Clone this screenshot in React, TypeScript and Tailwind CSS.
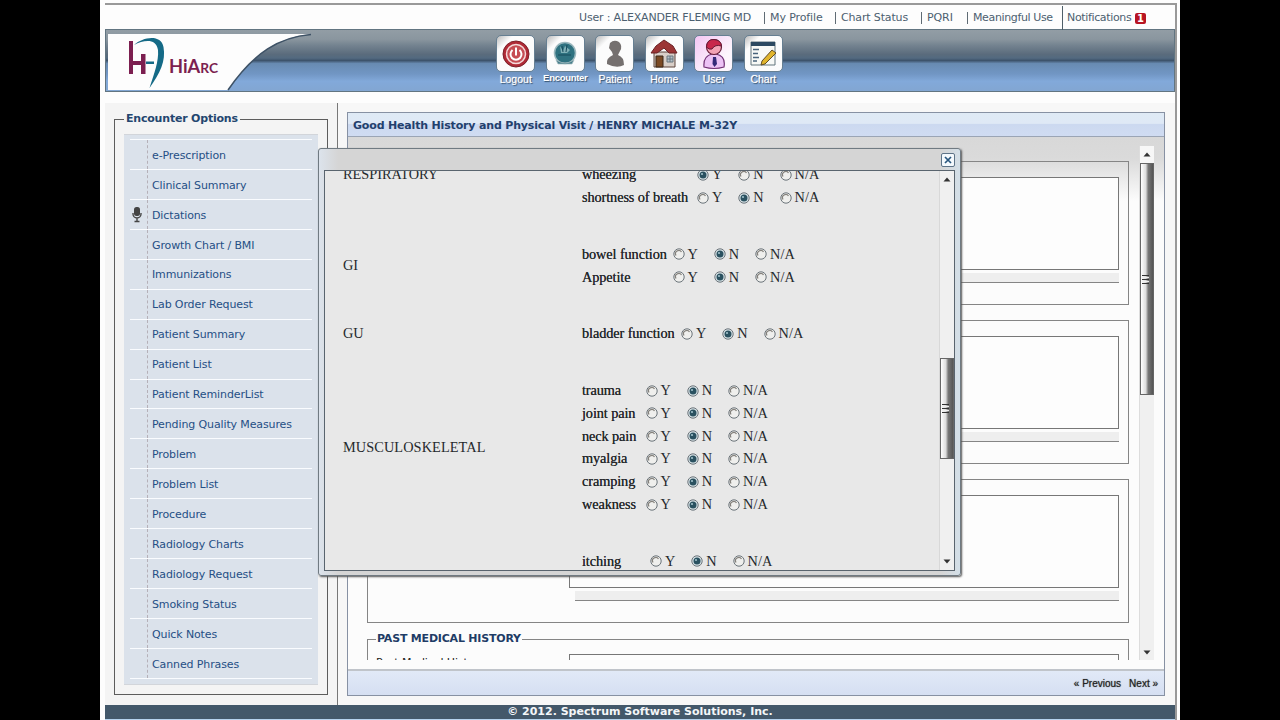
import React from 'react';

const MENU = [
    'e-Prescription', 'Clinical Summary', 'Dictations', 'Growth Chart / BMI', 'Immunizations',
    'Lab Order Request', 'Patient Summary', 'Patient List', 'Patient ReminderList',
    'Pending Quality Measures', 'Problem', 'Problem List', 'Procedure', 'Radiology Charts',
    'Radiology Request', 'Smoking Status', 'Quick Notes', 'Canned Phrases',
];

type Group = { name: string; label: string; pad: string; rows: [string, number][] };

// second value of a row is the selected answer: 0 = Y, 1 = N, 2 = N/A
const GROUPS: Group[] = [
    { name: 'RESPIRATORY', label: 'w-[115px]', pad: 'pt-[23px]', rows: [['wheezing', 0], ['shortness of breath', 1]] },
    { name: 'GI', label: 'w-[90.5px]', pad: '', rows: [['bowel function', 1], ['Appetite', 1]] },
    { name: 'GU', label: 'w-[99px]', pad: '', rows: [['bladder function', 1]] },
    {
        name: 'MUSCULOSKELETAL', label: 'w-[63.5px]', pad: '',
        rows: [['trauma', 1], ['joint pain', 1], ['neck pain', 1], ['myalgia', 1], ['cramping', 1], ['weakness', 1]],
    },
    { name: '', label: 'w-[68px]', pad: '', rows: [['itching', 1]] },
];

function Logo() {
    return (
        <svg width="230" height="61" viewBox="0 0 230 61" className="shrink-0">
            <path d="M2 4 H205 C174 7 148 22 122 60 H2 Z" fill="#fdfdfd" />
            <path d="M205 4.500 C174 7 148 22 122 60" fill="none" stroke="#3e5266" strokeWidth="1.500" />
            <path d="M23 11 h4 v20 h8 v-7 h4.500 v20 h-4.500 v-9 h-8 v9 h-4 z" fill="#7c1f50" />
            <path d="M28 15 C37 7 55 4 57.500 17 C60 31 54 43 43.500 58 C48 44 53 31 52 20 C50 8 38 10 28 15 Z" fill="#156a86" />
            <rect x="40" y="31.500" width="8" height="2.500" fill="#156a86" />
            <text x="63" y="42.500" fill="#7c1f50" fontFamily="Lato, sans-serif" fontWeight="700" fontSize="18.500" textLength="49" lengthAdjust="spacingAndGlyphs">
                HiA<tspan fontSize="14">RC</tspan>
            </text>
        </svg>
    );
}

function LogoutIcon() {
    return (
        <svg width="30" height="30" viewBox="0 0 30 30">
            <circle cx="15" cy="15" r="13" fill="#b02a36" stroke="#7c2029" />
            <circle cx="15" cy="15" r="9.500" fill="#c64d54" stroke="#f4dada" strokeWidth="1.500" />
            <path d="M11.500 11 a5.500 5.500 0 1 0 7 0 M15 8.500 v8" fill="none" stroke="#fff" strokeWidth="2" />
        </svg>
    );
}

function EncounterIcon() {
    return (
        <svg width="30" height="30" viewBox="0 0 30 30">
            <circle cx="15" cy="14" r="10.500" fill="#2f7280" stroke="#9ab7bd" strokeWidth="1.500" />
            <path d="M10 7 l3 5 2-5 5 4 -3 3 -6 0z" fill="#7fb0b6" />
            <path d="M12 7 l1 6 M17 6 l-1 7 M8 16 h13" stroke="#174b5b" fill="none" />
            <path d="M6 21 q9 6 18 0 l-2 4 h-14z" fill="#447d89" stroke="#a9bfc3" strokeWidth=".7" />
        </svg>
    );
}

function PatientIcon() {
    return (
        <svg width="30" height="32" viewBox="0 0 30 32">
            <path d="M10 5 Q14 1 19 4 Q23 8 20 13 L18 17 Q24 19 24 27 Q17 31 7 26 Q6 20 13 17 L12 14 L9 10 Z" fill="#75706f" />
        </svg>
    );
}

function HomeIcon() {
    return (
        <svg width="30" height="30" viewBox="0 0 30 30">
            <path d="M5 13 h21 v15 h-21z" fill="#d9cfc8" stroke="#5c443c" />
            <path d="M2 14 L7 7 L15 1 L24 7 L28 14 H20 L15 9 L8 14 Z" fill="#9c3535" stroke="#6b2225" />
            <path d="M7 17 h7 v11 h-7z" fill="#7b4a24" stroke="#3b2616" />
            <path d="M18 17 h6 v6 h-6z M21 17 v6 M18 20 h6" fill="#b4c0c8" stroke="#68777f" />
        </svg>
    );
}

function UserIcon() {
    return (
        <svg width="30" height="32" viewBox="0 0 30 32">
            <path d="M5 29 Q4 18 13 16 H17 Q27 18 25 29 Q15 32 5 29Z" fill="#ecc2f5" stroke="#713175" strokeWidth="1.200" />
            <circle cx="15" cy="9" r="7.500" fill="#f3a2b6" stroke="#651b37" strokeWidth="1.200" />
            <path d="M7.500 9 Q8 1 15 1.500 Q22 2 22.500 8 Q16 6 13 11 Q10 12 7.500 9Z" fill="#c8274b" stroke="#651b37" />
            <path d="M14 19 h3 l1 7 -2.500 3 -2-3z" fill="#342a79" />
        </svg>
    );
}

function ChartIcon() {
    return (
        <svg width="30" height="30" viewBox="0 0 30 30">
            <path d="M3 3 h24 v23 h-24z" fill="#f8f9f6" stroke="#63747c" />
            <path d="M3 3 h24 v4 h-24z" fill="#2c4961" />
            <path d="M5 10.500 h6 M5 14.500 h5 M5 18.500 h6 M5 22 h4" stroke="#49647c" strokeWidth="1.500" />
            <path d="M24 11 l4 3 -11 11 -4 1 1-4z" fill="#e1b52c" stroke="#604d28" />
        </svg>
    );
}

const TOOLS = [
    { name: 'Logout', icon: <LogoutIcon /> },
    { name: 'Encounter', icon: <EncounterIcon /> },
    { name: 'Patient', icon: <PatientIcon /> },
    { name: 'Home', icon: <HomeIcon /> },
    { name: 'User', icon: <UserIcon /> },
    { name: 'Chart', icon: <ChartIcon /> },
];

function Radio({ on }: { on: boolean }) {
    return (
        <svg width="12" height="12" viewBox="0 0 12 12" className="shrink-0">
            <circle cx="6" cy="6" r="5.200" fill={on ? '#d7e2e6' : '#efefed'} stroke="#6b747a" />
            {on ? (
                <>
                    <circle cx="6" cy="6" r="3.500" fill="#2a5160" />
                    <circle cx="5" cy="5" r="1.100" fill="#9fc0ca" />
                </>
            ) : (
                <path d="M3 7.500 A3.200 3.200 0 0 1 8.500 4" fill="none" stroke="#85827d" strokeWidth="1.300" />
            )}
        </svg>
    );
}

function Grip() {
    return (
        <div className="-ml-[3px] flex w-[7px] flex-col gap-px">
            <div className="h-px bg-[#333]" />
            <div className="h-px bg-[#eee]" />
            <div className="h-px bg-[#333]" />
            <div className="h-px bg-[#eee]" />
            <div className="h-px bg-[#333]" />
        </div>
    );
}

function Arrow({ down }: { down?: boolean }) {
    return (
        <svg width="8" height="5" viewBox="0 0 8 5">
            <path d={down ? 'M0.500 0.500 h7 L4 4.500z' : 'M0.500 4.500 h7 L4 .5z'} fill="#333" />
        </svg>
    );
}

function TopNav() {
    return (
        <div className="flex h-[25px] items-center bg-[#fdfdfd] pt-px pl-[474px] text-[11px] whitespace-nowrap text-[#4c6070]">
            <div className="w-[185px] tracking-[-0.17px]">User : ALEXANDER FLEMING MD</div>
            <div className="w-[71px] border-l border-[#5f6b74] pl-[5px] leading-[12px] tracking-[-0.1px]">My Profile</div>
            <div className="w-[86px] border-l border-[#5f6b74] pl-[5px] leading-[12px] tracking-[-0.15px]">Chart Status</div>
            <div className="w-[46px] border-l border-[#5f6b74] pl-[5px] leading-[12px] tracking-[-0.1px]">PQRI</div>
            <div className="w-[95px] border-l border-[#5f6b74] pl-[5px] leading-[12px] tracking-[-0.37px]">Meaningful Use</div>
            <div className="flex h-full items-center border-l border-[#4f5f69] pl-[4px]">
                <span className="w-[68px] tracking-[-0.35px]">Notifications</span>
                <span className="flex h-[11px] w-[11px] items-center justify-center rounded-[2px] bg-[#b81422] text-[10px] font-bold text-white">1</span>
            </div>
        </div>
    );
}

function Banner() {
    return (
        <div className="flex h-[63px] overflow-hidden border border-[#627581] bg-[linear-gradient(#929da5_0%,#8a969f_15%,#748390_25%,#5a6b7c_40%,#536a80_46%,#3d536b_50%,#688bb2_55%,#7196c4_72%,#82a9da_84%,#82a6d2_100%)]">
            <Logo />
            <div className="ml-[155px] flex pt-[5px]">
                {TOOLS.map((t) => (
                    <div key={t.name} className="flex w-[49.5px] flex-col items-center">
                        <div className={t.name === 'User'
                            ? 'flex h-[37px] w-[39px] items-center justify-center rounded-[5px] border border-[#667f92] bg-[linear-gradient(135deg,#f3c6f3,#fdf6fd_70%)]'
                            : 'flex h-[37px] w-[39px] items-center justify-center rounded-[5px] border border-[#667f92] bg-[linear-gradient(135deg,#bbb_0%,#fcfcfc_22%)]'}>
                            {t.icon}
                        </div>
                        <div className={t.name === 'Encounter'
                            ? "font-['Liberation_Sans',sans-serif] text-[9.5px] leading-[12px] font-bold tracking-[-0.3px] text-white [text-shadow:1px_1px_1px_#34506c]"
                            : "font-['Liberation_Sans',sans-serif] text-[10.5px] leading-[14px] text-white [text-shadow:1px_1px_1px_#34506c,0_0_1px_#fff]"}>
                            {t.name}
                        </div>
                    </div>
                ))}
            </div>
        </div>
    );
}

function Sidebar() {
    return (
        <div className="h-[602px] w-[233px] shrink-0 border-r border-[#777] bg-[#f4f4f4] pt-[9px] pl-[9px]">
            <fieldset className="h-[583px] w-[214px] border border-[#5c5c5c] px-[9px]">
                <legend className="px-[2px] text-[11px] leading-[14px] font-bold tracking-[-0.2px] text-[#23466f]">Encounter Options</legend>
                <div className="mt-[8px] h-[551px] w-[194px] border-y border-[#d2d5da] bg-[#dbe2eb] pt-[4px]">
                    <div className="mx-[6px] h-px bg-[#fafcff]" />
                    {MENU.map((m) => (
                        <div key={m} className="mx-[6px] flex h-[29.94px] items-stretch border-b border-[#fafcff]">
                            <div className="flex w-[18px] items-center justify-center border-r border-dashed border-[#b5b0b8]">
                                {m === 'Dictations' && (
                                    <svg width="10" height="17" viewBox="0 0 10 17" className="-ml-[3px] shrink-0">
                                        <rect x="2" y="1" width="6" height="9" rx="2.500" fill="#444" />
                                        <path d="M1 7 v1 a4 4 0 0 0 8 0 v-1 M5 12 v3 M2.500 15.500 h5" fill="none" stroke="#444" strokeWidth="1.400" />
                                    </svg>
                                )}
                            </div>
                            <div className="flex items-center pt-[3px] pl-[4px] text-[11px] tracking-[-0.12px] whitespace-nowrap text-[#254f85]">{m}</div>
                        </div>
                    ))}
                </div>
            </fieldset>
        </div>
    );
}

function Section() {
    return (
        <div className="h-[144px] shrink-0 border border-[#858585] pt-[15px] pl-[201px]">
            <div className="h-[93px] w-[550px] border border-[#777] bg-[#fdfdfd]" />
            <div className="mt-[3px] ml-[6px] h-[10px] w-[544px] border-b border-[#858585] bg-[#eeeeee]" />
        </div>
    );
}

function MainPanel() {
    return (
        <div className="mt-[9px] ml-[9px] flex h-[584px] w-[818px] flex-col border border-[#8791a3] bg-[#fcfcfc]">
            <div className="flex h-[24px] shrink-0 items-center border-b border-[#9ba5b5] bg-[linear-gradient(#dfeaf5_0%,#dfe9f6_45%,#ccd9f0_50%,#d0dcf2_100%)] pt-[3px] pl-[5px] text-[11px] font-bold tracking-[-0.17px] text-[#23406d]">
                Good Health History and Physical Visit / HENRY MICHALE M-32Y
            </div>
            <div className="flex h-[532px] shrink-0 bg-[linear-gradient(#d8d8d8_0%,#dadada_4%,#fcfcfc_12%)] pt-[9px] pl-[19px]">
                <div className="flex h-[514px] w-[762px] flex-col gap-[15px] overflow-hidden pt-[15px]">
                    <Section />
                    <Section />
                    <Section />
                    <fieldset className="-mt-[6px] h-[80px] shrink-0 border border-[#858585] pl-[8px]">
                        <legend className="px-[1px] text-[11px] leading-[14px] font-bold tracking-[-0.2px] text-[#1f3c66]">PAST MEDICAL HISTORY</legend>
                        <div className="flex pt-[8px]">
                            <div className="w-[193px] pt-[2px] text-[11px] leading-[14px] tracking-[-0.1px] text-[#222]">Past Medical History</div>
                            <div className="h-[60px] w-[550px] border border-[#777] bg-[#fdfdfd]" />
                        </div>
                    </fieldset>
                </div>
                <div className="ml-[10px] flex h-[514px] w-[15px] flex-col items-center border-l border-[#ddd] bg-[#f0f0f0]">
                    <div className="flex h-[17px] w-full items-center justify-center bg-[#f7f7f7]"><Arrow /></div>
                    <div className="flex h-[232px] w-[14px] items-center justify-center border border-[#666] bg-[linear-gradient(90deg,#fff_0%,#ddd_40%,#777_60%,#555_100%)]"><Grip /></div>
                    <div className="mt-auto flex h-[16px] items-center"><Arrow down /></div>
                </div>
            </div>
            <div className="flex flex-1 items-center justify-end gap-[8px] border-t-2 border-[#c0c4ca] bg-[linear-gradient(#e1e9f7,#d5dff2)] pr-[6px] font-['Liberation_Sans',sans-serif] text-[10px] text-[#222] [text-shadow:0_0_1px_#555]">
                <span>« Previous</span>
                <span>Next »</span>
            </div>
        </div>
    );
}

function ReviewDialog() {
    return (
        <div className="absolute top-[148px] left-[318px] h-[428px] w-[643px] rounded-[3px] border border-[#707a82] bg-[linear-gradient(90deg,#dce3ec,#d5d5d5_3%,#d5d5d5_97%,#d3dfe8)] px-[5px] shadow-[1px_1px_2px_#555]">
            <div className="flex h-[21px] items-center justify-end">
                <div className="flex h-[14px] w-[14px] items-center justify-center rounded-[2px] border border-[#5e7488] bg-[#f4f9fd]">
                    <svg width="8" height="8" viewBox="0 0 8 8"><path d="M1 1 L7 7 M7 1 L1 7" stroke="#29577f" strokeWidth="1.700" /></svg>
                </div>
            </div>
            <div className="flex h-[401px] w-[631px] overflow-hidden border border-[#59646e] bg-[#e8e8e8]">
                <div className="-mt-[30.5px] flex w-[614px] flex-col gap-[33.8px] font-['Liberation_Serif',serif] text-[14.3px] text-[#25282c]">
                    {GROUPS.map((g, i) => (
                        <div key={i} className="flex shrink-0 items-center pl-[18px]">
                            <div className={g.name === 'MUSCULOSKELETAL' ? 'w-[239px] tracking-[0.1px]' : 'w-[239px]'}>{g.name}</div>
                            <div className={g.pad}>
                                {g.rows.map(([label, value]) => (
                                    <div key={label} className="flex h-[22.85px] items-center whitespace-nowrap">
                                        <div className={g.label}><span className="tracking-[-0.1px] [text-shadow:0_0_0.5px_#333]">{label}</span></div>
                                        <div className="flex w-[41.3px] items-center gap-[3px]"><Radio on={value === 0} />Y</div>
                                        <div className="flex w-[41.3px] items-center gap-[3px]"><Radio on={value === 1} />N</div>
                                        <div className="flex items-center gap-[3px]"><Radio on={value === 2} />N/A</div>
                                    </div>
                                ))}
                            </div>
                        </div>
                    ))}
                </div>
                <div className="flex w-[15px] flex-col items-center border-l border-[#d8d8d8] bg-[#f0f0f0]">
                    <div className="flex h-[17px] items-center"><Arrow /></div>
                    <div className="mt-[170px] flex h-[101px] w-[14px] items-center justify-center border border-[#666] bg-[linear-gradient(90deg,#fff_0%,#ddd_40%,#777_60%,#555_100%)]"><Grip /></div>
                    <div className="mt-auto flex h-[17px] items-center"><Arrow down /></div>
                </div>
            </div>
        </div>
    );
}

export default function App() {
    return (
        <div className="relative flex h-[720px] w-[1280px] justify-center overflow-hidden bg-black font-['DejaVu_Sans',Verdana,sans-serif]">
            <div className="w-[1080px] bg-[#fdfdfd] pt-[3px] pl-[5px]">
                <div className="h-[717px] w-[1072px] border-t-2 border-r-2 border-[#999]">
                    <TopNav />
                    <div className="-mt-px"><Banner /></div>
                    <div className="mt-[11px] flex h-[602px] bg-[#f7f7f7]">
                        <Sidebar />
                        <MainPanel />
                    </div>
                    <div className="flex h-[14px] items-center justify-center bg-[#43586a] pt-px text-[11px] font-bold text-[#f4f6f8]">
                        © 2012. Spectrum Software Solutions, Inc.
                    </div>
                    <div className="h-px bg-[#b5d2ed]" />
                </div>
            </div>
            <ReviewDialog />
        </div>
    );
}
